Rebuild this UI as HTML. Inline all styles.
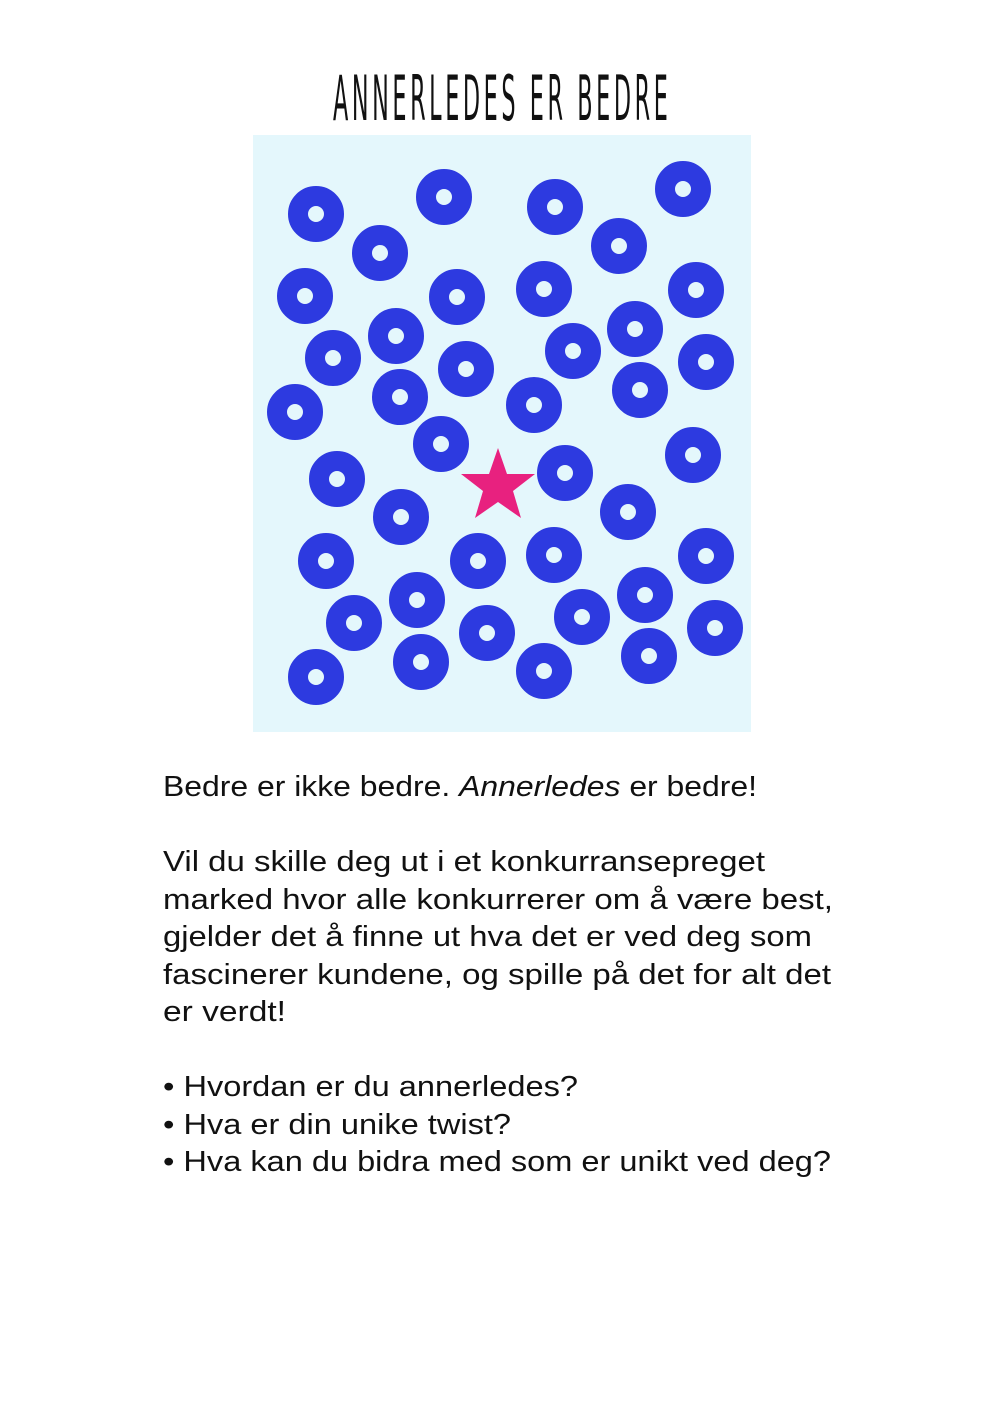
<!DOCTYPE html>
<html><head><meta charset="utf-8"><style>html,body{margin:0;padding:0;background:#fff}svg{display:block}</style></head>
<body>
<svg width="1000" height="1410" viewBox="0 0 1000 1410" xmlns="http://www.w3.org/2000/svg">
<g transform="translate(333,120) scale(0.36,1)">
<text x="0" y="0" font-family="DejaVu Sans, Liberation Sans, sans-serif" font-weight="400" font-size="62" fill="#111" textLength="930" lengthAdjust="spacing">ANNERLEDES ER BEDRE</text>
</g>
<rect x="253" y="135" width="498" height="597" fill="#e4f7fc"/>
<g fill="none" stroke="#2d3ae0" stroke-width="20">
<circle cx="316" cy="214" r="18"/><circle cx="444" cy="197" r="18"/><circle cx="555" cy="207" r="18"/><circle cx="683" cy="189" r="18"/>
<circle cx="380" cy="253" r="18"/><circle cx="619" cy="246" r="18"/><circle cx="305" cy="296" r="18"/><circle cx="457" cy="297" r="18"/>
<circle cx="544" cy="289" r="18"/><circle cx="696" cy="290" r="18"/><circle cx="396" cy="336" r="18"/><circle cx="635" cy="329" r="18"/>
<circle cx="333" cy="358" r="18"/><circle cx="466" cy="369" r="18"/><circle cx="573" cy="351" r="18"/><circle cx="706" cy="362" r="18"/>
<circle cx="295" cy="412" r="18"/><circle cx="400" cy="397" r="18"/><circle cx="534" cy="405" r="18"/><circle cx="640" cy="390" r="18"/>
<circle cx="441" cy="444" r="18"/><circle cx="565" cy="473" r="18"/><circle cx="693" cy="455" r="18"/><circle cx="337" cy="479" r="18"/>
<circle cx="401" cy="517" r="18"/><circle cx="628" cy="512" r="18"/><circle cx="326" cy="561" r="18"/><circle cx="478" cy="561" r="18"/>
<circle cx="554" cy="555" r="18"/><circle cx="706" cy="556" r="18"/><circle cx="417" cy="600" r="18"/><circle cx="645" cy="595" r="18"/>
<circle cx="354" cy="623" r="18"/><circle cx="487" cy="633" r="18"/><circle cx="582" cy="617" r="18"/><circle cx="715" cy="628" r="18"/>
<circle cx="316" cy="677" r="18"/><circle cx="421" cy="662" r="18"/><circle cx="544" cy="671" r="18"/><circle cx="649" cy="656" r="18"/>
</g>
<polygon fill="#e8217f" points="498,448 507,474 535,474 513,491 521,518 498,502 475,518 483,491 461,474 489,474"/>
<g font-family="Liberation Sans, sans-serif" font-size="29" fill="#111">
<text x="163" y="796" textLength="594" lengthAdjust="spacingAndGlyphs">Bedre er ikke bedre. <tspan font-style="italic">Annerledes</tspan> er bedre!</text>
<text x="163" y="871" textLength="602" lengthAdjust="spacingAndGlyphs">Vil du skille deg ut i et konkurransepreget</text>
<text x="163" y="909" textLength="670" lengthAdjust="spacingAndGlyphs">marked hvor alle konkurrerer om å være best,</text>
<text x="163" y="946" textLength="649" lengthAdjust="spacingAndGlyphs">gjelder det å finne ut hva det er ved deg som</text>
<text x="163" y="984" textLength="668" lengthAdjust="spacingAndGlyphs">fascinerer kundene, og spille på det for alt det</text>
<text x="163" y="1021" textLength="123" lengthAdjust="spacingAndGlyphs">er verdt!</text>
<text x="163" y="1096" textLength="415" lengthAdjust="spacingAndGlyphs">• Hvordan er du annerledes?</text>
<text x="163" y="1134" textLength="348" lengthAdjust="spacingAndGlyphs">• Hva er din unike twist?</text>
<text x="163" y="1171" textLength="668" lengthAdjust="spacingAndGlyphs">• Hva kan du bidra med som er unikt ved deg?</text>
</g>
</svg>
</body></html>
